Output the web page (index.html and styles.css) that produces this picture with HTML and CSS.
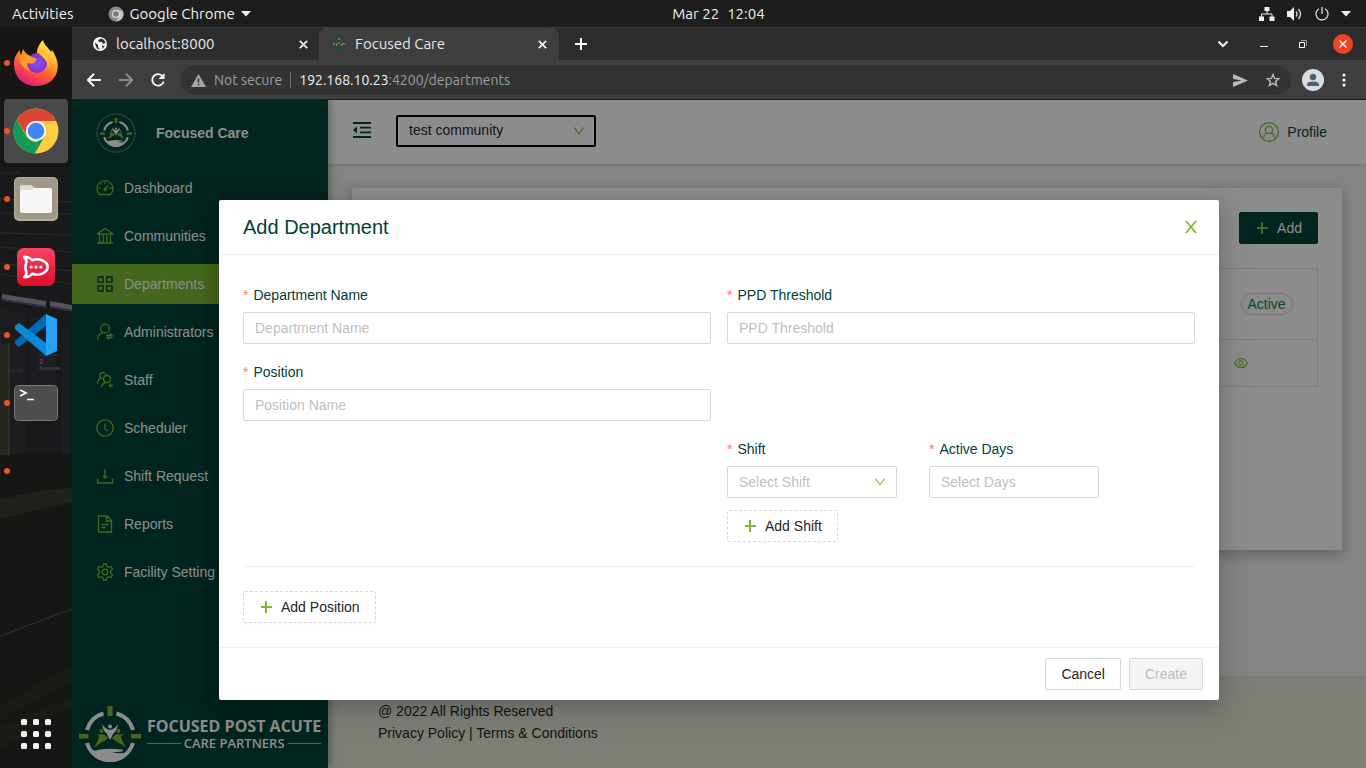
FILE: index.html
```html
<!DOCTYPE html>
<html lang="en">
<head>
<meta charset="utf-8">
<meta name="viewport" content="width=device-width, initial-scale=1">
<title>Focused Care</title>
<link rel="stylesheet" href="styles.css">
</head>
<body>
<svg class="defs" aria-hidden="true">
  <symbol id="plus" viewBox="0 0 14 14"><path d="M7 1v12M2 7h11" fill="none" stroke="currentColor" stroke-width="2"/></symbol>
  <symbol id="down" viewBox="64 64 896 896"><path fill="currentColor" d="M884 256h-75c-5.100 0-9.900 2.500-12.900 6.600L512 654.200 227.900 262.600c-3-4.100-7.800-6.600-12.900-6.600h-75c-6.500 0-10.300 7.400-6.500 12.700l352.600 486.100c12.800 17.600 39 17.600 51.700 0l352.600-486.100c3.900-5.300.1-12.700-6.400-12.700z"/></symbol>
  <symbol id="mark" viewBox="0 0 62 56">
    <g fill="none" stroke="#fff" stroke-width="4">
      <path d="M37.500 7.500A24 24 0 0 1 54 24M54 37A24 24 0 0 1 8 37M8 24A24 24 0 0 1 24.500 7.500"/>
    </g>
    <path d="M28.500 0h5v10h-5zM0 28h9.500v4.500H0zM52 28h10v4.500H52z" fill="#7cba35"/>
    <g fill="#7cba35"><circle cx="22.500" cy="25" r="2"/><circle cx="39.500" cy="25" r="2"/>
      <path d="M14.500 27q5 2.500 10 1l5 4-5 3.500-10 6q4.500-6 5.500-11.500zM47.500 27q-5 2.500-10 1l-5 4 5 3.500 10 6q-4.500-6-5.500-11.500z"/></g>
    <g fill="#fff"><circle cx="31" cy="20.500" r="2"/><path d="M23 18q3 5 8 6 5-1 8-6-1 7-5 10l-3 6-3-6q-4-3-5-10z"/>
      <path d="M10 44q7 1 11-.5 9-1.500 22 0 2 1 0 2l-10 1q14 2 18-2-6 11-20 11.500Q17 55.500 10 44z"/></g>
  </symbol>
</svg>

<header class="topbar">
  <span class="topbar-left">
    <span>Activities</span>
    <span class="app-menu">
      <svg width="16" height="16" viewBox="0 0 16 16"><circle cx="8" cy="8" r="7.500" fill="#8a8a8a"/><path d="M8 4.500h6.600A7.500 7.500 0 0 1 8.500 15.500L11 10z" fill="#c4c4c4"/><circle cx="8" cy="8" r="4" fill="#ddd"/><circle cx="8" cy="8" r="2.800" fill="#777"/></svg>
      Google Chrome
      <svg width="10" height="6" viewBox="0 0 10 6"><path d="M0 0h10L5 5.500z" fill="#f2f2f2"/></svg>
    </span>
  </span>
  <span class="clock"><span>Mar 22</span><span>12:04</span></span>
  <span class="tray">
    <svg width="16" height="14" viewBox="0 0 16 14" fill="#f2f2f2"><path d="M5.500 0h5v4h-5zM0 9.500h5V14H0zM10.500 9.500h5V14h-5z"/><path d="M8 4v3M2.500 10V7h10.500v3" fill="none" stroke="#f2f2f2"/></svg>
    <svg width="16" height="14" viewBox="0 0 16 14"><path d="M0 4h3l4-4v14l-4-4H0z" fill="#f2f2f2"/><path d="M9 4.500q2 2.500 0 5M11.500 2q4 5 0 10" fill="none" stroke="#ddd" stroke-width="1.300"/></svg>
    <svg width="14" height="14" viewBox="0 0 14 14"><path d="M7 0v7M4 1.800a6 6 0 1 0 6 0" fill="none" stroke="#ddd" stroke-width="1.300"/></svg>
    <svg width="10" height="6" viewBox="0 0 10 6"><path d="M0 0h10L5 5.500z" fill="#f2f2f2"/></svg>
  </span>
</header>

<div class="desktop">
  <nav class="dock" aria-label="Dock">
    <svg class="wallpaper" viewBox="0 0 72 741" preserveAspectRatio="none" aria-hidden="true">
      <rect width="72" height="741" fill="#161615"/>
      <rect y="140" width="72" height="287" fill="#18191a"/>
      <path d="M0 146h20M0 172l72 3M0 186l72 1M0 206l72 2M0 220l72 5M0 236l72 8M0 247l72 10" stroke="#262622" stroke-width="1.500" fill="none"/>
      <path d="M2 267l44 7v5L2 272zM50 274l22 4v5l-22-4z" fill="#56525c"/>
      <path d="M2 273l44 7M50 280l22 4" stroke="#392e4c" stroke-width="1.500"/>
      <path d="M0 280l26 7v140H9V316H0z" fill="#1b1c1e"/>
      <path d="M0 316l9 2v110H0z" fill="#26251f"/><path d="M9 316v112" stroke="#3c3a31"/>
      <path d="M30 290h26v80H30zM62 300h8v128h-8z" fill="#1b1d22"/>
      <path d="M38 328h22" stroke="#333"/>
      <text x="39" y="337" class="street">2</text><text x="39" y="343" class="avenue">Avenue</text>
      <text x="9" y="345" class="avenue faded">enue</text>
      <path d="M0 472l40-8 32-3v14L0 492z" fill="#22201b"/>
      <path d="M0 609l72-27" stroke="#32312e"/>
      <path d="M0 677l72-37v14L0 694zM0 700l72-30v10L0 722z" fill="#1a1916"/>
    </svg>
    <button class="dock-item running" aria-label="Firefox">
      <svg width="46" height="48" viewBox="0 0 46 48"><defs><linearGradient id="fx" x1=".8" y1="0" x2=".3" y2="1"><stop offset="0" stop-color="#fff44f"/><stop offset=".35" stop-color="#ffb02e"/><stop offset=".65" stop-color="#ff5a30"/><stop offset="1" stop-color="#e31587"/></linearGradient><radialGradient id="fy"><stop offset="0" stop-color="#7d54f5"/><stop offset="1" stop-color="#8a2fc2"/></radialGradient></defs>
      <path d="M30 1c1 5 5 7 8 12l1-2c5 7 7 15 5 22-3 9-11 14-21 14C10 47 1 38 1 25 1 18 4 14 7 11c0 2 0 4 1 5l2-6c1 3 4 5 7 7 3-1 5-1 7 0-1-6 2-12 6-16z" fill="url(#fx)"/><circle cx="24" cy="24" r="10" fill="url(#fy)"/><path d="M7 17q5-3 10 0l7 3-3 4q-4 1-7 0 0 5 4 8-8-2-11-9z" fill="#ff9a2c"/><path d="M25 14q12 1 11 14-2-7-11-14z" fill="#ffc13b"/></svg>
    </button>
    <button class="dock-item running focused" aria-label="Google Chrome">
      <svg width="46" height="46" viewBox="0 0 46 46"><circle cx="23" cy="23" r="22.500" fill="#ffcd42"/><path d="M3.500 12A22.500 22.500 0 0 1 42.500 12L43 13H23L15 29z" fill="#dc4437"/><path d="M3.500 11.700L14 29q4 5 10 5l-2 11.500A22.500 22.500 0 0 1 3.500 11.700z" fill="#149a58"/><path d="M24 34l-2 11.500 10-18z" fill="#149a58"/><circle cx="23" cy="23" r="10.200" fill="#f4f4f4"/><circle cx="23" cy="23" r="8.300" fill="#4285f4"/></svg>
    </button>
    <button class="dock-item running" aria-label="Files">
      <svg width="44" height="44" viewBox="0 0 44 44"><rect width="44" height="44" rx="5" fill="#b5ae9b"/><rect x="1" y="1" width="42" height="41" rx="4" fill="#9f9887"/><path d="M6 10q0-2 2-2h9l4 3h15q2 0 2 2v4H6z" fill="#e0ddd2"/><path d="M6 15q0-2 2-2h10l3-2h15q2 0 2 2v21q0 2-2 2H8q-2 0-2-2z" fill="#f8f7f5"/></svg>
    </button>
    <button class="dock-item running" aria-label="Rocket.Chat">
      <svg width="38" height="38" viewBox="0 0 39 39"><defs><linearGradient id="rc" x2="0" y2="1"><stop stop-color="#f84460"/><stop offset="1" stop-color="#dd0c2c"/></linearGradient></defs><rect width="39" height="39" rx="7" fill="url(#rc)"/><path d="M7.500 9q5 0 8 3.500 6-2 11 .5 5 2.500 5 6.500t-5 6.500q-5 2.500-11 .5-3 3.500-8 3.500 3-3 2-6-2-4 0-8.500 1-3-2-6z" fill="none" stroke="#fff" stroke-width="2.600" stroke-linejoin="round"/><g fill="#fff"><circle cx="14.500" cy="19.500" r="1.600"/><circle cx="19.500" cy="19.500" r="1.600"/><circle cx="24.500" cy="19.500" r="1.600"/></g></svg>
    </button>
    <button class="dock-item running" aria-label="Visual Studio Code">
      <svg width="42" height="42" viewBox="0 0 42 42"><path d="M31 0L0 27v3l4 3L31 12z" fill="#0069b4"/><path d="M0 12l4-3 27 20v13L0 15z" fill="#0a8ad6"/><path d="M31 0l11 5v32l-11 5z" fill="#26a3f0"/></svg>
    </button>
    <button class="dock-item running" aria-label="Terminal">
      <svg width="44" height="36" viewBox="0 0 44 36"><rect x=".5" y=".5" width="43" height="35" rx="4" fill="#4d4d4d" stroke="#777"/><path d="M6 5l6 3-6 3M13 14.500h7" fill="none" stroke="#fff" stroke-width="1.700"/></svg>
    </button>
    <button class="dock-item running" aria-label="Running application"></button>
    <button class="dock-item apps" aria-label="Show Applications">
      <svg width="30" height="30" viewBox="0 0 30 30" fill="#f2f2f2"><rect width="6" height="6" rx="1.500"/><rect x="12" width="6" height="6" rx="1.500"/><rect x="24" width="6" height="6" rx="1.500"/><rect y="12" width="6" height="6" rx="1.500"/><rect x="12" y="12" width="6" height="6" rx="1.500"/><rect x="24" y="12" width="6" height="6" rx="1.500"/><rect y="24" width="6" height="6" rx="1.500"/><rect x="12" y="24" width="6" height="6" rx="1.500"/><rect x="24" y="24" width="6" height="6" rx="1.500"/></svg>
    </button>
  </nav>

  <div class="browser">
    <div class="tabstrip">
      <div class="tab">
        <svg width="14" height="14" viewBox="0 0 14 14"><circle cx="7" cy="7" r="7" fill="#f2f2f2"/><path d="M2 5.500l3 2.500v2l2 2.500Q2.500 12 2 5.500zM6 2.500l3-1q3 1.500 3.500 4.500L10 7 9 5H6.500L5 4zM9 8.500l2.500.5L9.500 12z" fill="#2c2c2c"/></svg>
        <span class="tab-title">localhost:8000</span>
        <button class="tab-close" aria-label="Close tab"><svg width="9" height="9" viewBox="0 0 9 9"><path d="M.8.8l7.400 7.400M8.200.8L.8 8.200" stroke="#f2f2f2" stroke-width="1.700"/></svg></button>
      </div>
      <div class="tab active">
        <svg width="16" height="16" viewBox="0 0 16 16"><circle cx="8" cy="8" r="7" fill="none" stroke="#264940"/><path d="M4 13q4 2 8-1l-2-1H6z" fill="#1c4a40"/><path d="M8 2v2M2 8h4M11 8h4M5 9.500l3-2.500 3 2.500" stroke="#62a13a" stroke-width="1.500" stroke-dasharray="2 1" fill="none"/></svg>
        <span class="tab-title">Focused Care</span>
        <button class="tab-close" aria-label="Close tab"><svg width="9" height="9" viewBox="0 0 9 9"><path d="M.8.8l7.400 7.400M8.200.8L.8 8.200" stroke="#f2f2f2" stroke-width="1.700"/></svg></button>
      </div>
      <button class="new-tab" aria-label="New tab"><svg width="12" height="12" viewBox="0 0 12 12"><path d="M6 0v12M0 6h12" stroke="#fff" stroke-width="2"/></svg></button>
      <div class="window-controls">
        <button aria-label="Search tabs"><svg width="12" height="8" viewBox="0 0 12 8"><path d="M1.500 1.500L6 6l4.500-4.500" fill="none" stroke="#f2f2f2" stroke-width="2"/></svg></button>
        <button aria-label="Minimize"><svg width="8" height="9" viewBox="0 0 8 9"><path d="M0 6.500h8" stroke="#f2f2f2"/></svg></button>
        <button aria-label="Restore"><svg width="8" height="8" viewBox="0 0 8 8"><path d="M.5 2.500h5v5h-5z" fill="none" stroke="#fff"/><path d="M2 .5h5.500V6" fill="none" stroke="#999"/></svg></button>
        <button class="window-close" aria-label="Close"><svg width="8" height="8" viewBox="0 0 8 8"><path d="M.5.5l7 7M7.500.5l-7 7" stroke="#fff" stroke-width="1.300"/></svg></button>
      </div>
    </div>
    <div class="toolbar">
      <button aria-label="Back"><svg width="14" height="14" viewBox="0 0 14 14"><path d="M14 7H1.500M7 .8L1 7l6 6.200" fill="none" stroke="#f5f5f5" stroke-width="2"/></svg></button>
      <button aria-label="Forward"><svg width="14" height="14" viewBox="0 0 14 14"><path d="M0 7h12.500M7 .8L13 7l-6 6.200" fill="none" stroke="#8b8b8b" stroke-width="2"/></svg></button>
      <button aria-label="Reload"><svg width="14" height="14" viewBox="0 0 15 15"><path d="M12.500 3.500A6.200 6.200 0 1 0 13.600 9" fill="none" stroke="#f5f5f5" stroke-width="2"/><path d="M14.500 0v6.500H8z" fill="#f5f5f5"/></svg></button>
      <div class="omnibox">
        <svg width="15" height="13" viewBox="0 0 15 13"><path d="M7.500 0L15 13H0z" fill="#a3a7ab"/><path d="M7.500 4.500v4M7.500 9.800v1.500" stroke="#333" stroke-width="1.500"/></svg>
        <span class="security">Not secure</span>
        <span class="url"><b>192.168.10.23</b>:4200/departments</span>
        <button aria-label="Share"><svg width="15" height="13" viewBox="0 0 15 13"><path d="M0 0l15 6.500L0 13V8l9-1.500L0 5z" fill="#b8bbbf"/></svg></button>
        <button aria-label="Bookmark"><svg width="14" height="14" viewBox="0 0 14 14"><path d="M7 1.500l1.600 3.900 4.200.3-3.200 2.700 1 4.100L7 10.300l-3.600 2.200 1-4.100L1.200 5.700l4.200-.3z" fill="none" stroke="#b8bbbf" stroke-width="1.400"/></svg></button>
      </div>
      <button class="avatar" aria-label="Account"><svg width="22" height="22" viewBox="0 0 22 22"><circle cx="11" cy="11" r="11" fill="#dadce0"/><circle cx="11" cy="8" r="3.200" fill="#4f6072"/><path d="M5 17v-1.500q0-3 6-3t6 3V17z" fill="#4f6072"/></svg></button>
      <button aria-label="Menu"><svg width="4" height="14" viewBox="0 0 4 14" fill="#f5f5f5"><circle cx="2" cy="2" r="1.600"/><circle cx="2" cy="7" r="1.600"/><circle cx="2" cy="12" r="1.600"/></svg></button>
    </div>

    <div class="page">
      <aside class="sidebar">
        <div class="brand">
          <svg width="40" height="40" viewBox="0 0 40 40"><circle cx="20" cy="20" r="19" fill="none" stroke="#9aaea9" stroke-width="1.500" stroke-dasharray="1.500 1" opacity=".7"/><use href="#mark" x="4" y="5" width="32" height="29"/></svg>
          <span>Focused Care</span>
        </div>
        <nav class="menu">
          <a href="#"><svg width="18" height="18" viewBox="0 0 18 18"><path d="M3.500 15.500a8 8 0 1 1 11 0zM9 10.500l3-4M9 2.500v2M4.500 4.500l1 1M2.500 9h2M13.500 9h2M13.300 4.500l-.5.500"/><circle cx="9" cy="10.500" r="1"/></svg>Dashboard</a>
          <a href="#"><svg width="18" height="18" viewBox="0 0 18 18"><path d="M1.500 6.500L9 1.500l7.500 5v.5h-15zM3.500 7v8.500M7.200 7v8.500M10.800 7v8.500M14.500 7v8.500M1 16h16"/></svg>Communities</a>
          <a href="#" class="current"><svg width="18" height="18" viewBox="0 0 18 18"><path d="M2 2h5.200v5.200H2zM10.800 2H16v5.200h-5.200zM2 10.800h5.200V16H2zM10.800 10.800H16V16h-5.200z"/></svg>Departments</a>
          <a href="#"><svg width="18" height="18" viewBox="0 0 18 18"><circle cx="9" cy="5.500" r="4.300"/><path d="M1.500 16.500Q2 10.500 7.500 9.600M10 12.500h6l-2-2M16.500 14.500H11l2 2"/></svg>Administrators</a>
          <a href="#"><svg width="18" height="18" viewBox="0 0 18 18"><circle cx="11" cy="8" r="3.500"/><path d="M5.500 16.500q.5-4.500 5-5M14.500 12.500v4M12.500 14.500h4.500M6.500 7.500Q3 7 3.800 4q1-3 4-2.500 1.500.5 2.200 2M1.500 13q0-4 3.500-6"/></svg>Staff</a>
          <a href="#"><svg width="18" height="18" viewBox="0 0 18 18"><circle cx="9" cy="9" r="8.200"/><path d="M9 4.500V10l3 2"/></svg>Scheduler</a>
          <a href="#"><svg width="18" height="18" viewBox="0 0 18 18"><path d="M1.500 11.500v4.500h15v-4.500M9 2v9M7 9l2 2 2-2"/></svg>Shift Request</a>
          <a href="#"><svg width="18" height="18" viewBox="0 0 18 18"><path d="M2.500 1h8.500l4.500 4.500V17h-13zM10.500 1v5h5M5.500 9.500h7M5.500 12.500h4"/></svg>Reports</a>
          <a href="#"><svg width="18" height="18" viewBox="0 0 18 18"><circle cx="9" cy="9" r="2.800"/><path d="M7.500 1h3l.5 2.300 1.700 1 2.300-.8L16.500 6l-1.700 1.700v2.600l1.700 1.700-1.500 2.500-2.300-.8-1.700 1-.5 2.300h-3L7 14.700l-1.700-1-2.300.8L1.500 12l1.700-1.700V7.700L1.500 6 3 3.500l2.300.8 1.700-1z"/></svg>Facility Setting</a>
        </nav>
        <div class="partner">
          <svg width="62" height="56"><use href="#mark"/></svg>
          <div class="partner-text"><div class="partner-name">FOCUSED POST ACUTE</div><div class="partner-sub">CARE PARTNERS</div></div>
        </div>
      </aside>
      <div class="layout">
        <header class="app-header">
          <button class="fold" aria-label="Collapse menu"><svg width="18" height="16" viewBox="0 0 18 16"><path d="M0 1h18M7 5.700h11M7 10.300h11M0 15h18" stroke="#004237" stroke-width="1.800"/><path d="M0 8l4-3.500v7z" fill="#004237"/></svg></button>
          <div class="select-wrap community">
            <select aria-label="Community"><option>test community</option></select>
            <svg width="12" height="12"><use href="#down"/></svg>
          </div>
          <a class="profile" href="#"><svg width="20" height="20" viewBox="0 0 20 20" fill="none" stroke="#7cba35" stroke-width="1.200"><circle cx="10" cy="10" r="9.400"/><circle cx="10" cy="8" r="3.600"/><path d="M4.500 16q.5-4.500 4-5M15.500 16q-.5-4.500-4-5"/></svg>Profile</a>
        </header>
        <main class="content">
          <section class="card">
            <div class="card-bar"><button class="btn primary"><svg width="14" height="14"><use href="#plus"/></svg>Add</button></div>
            <table class="list">
              <tr class="tall"><td></td><td class="last"><span class="tag">Active</span></td></tr>
              <tr><td></td><td class="last actions"><button class="view" aria-label="View"><svg width="14" height="14" viewBox="64 64 896 896"><path fill="currentColor" d="M942.200 486.200C847.400 286.500 704.100 186 512 186c-192.200 0-335.400 100.500-430.200 300.300a60.300 60.300 0 0 0 0 51.500C176.600 737.500 319.900 838 512 838c192.200 0 335.400-100.500 430.200-300.300 7.700-16.200 7.700-35 0-51.500zM512 766c-161.300 0-279.400-81.800-362.700-254C232.600 339.800 350.700 258 512 258c161.300 0 279.400 81.800 362.700 254C791.500 684.200 673.400 766 512 766zm-4-430c-97.200 0-176 78.800-176 176s78.800 176 176 176 176-78.800 176-176-78.800-176-176-176zm0 288c-61.900 0-112-50.100-112-112s50.100-112 112-112 112 50.100 112 112-50.100 112-112 112z"/></svg></button></td></tr>
            </table>
          </section>
        </main>
        <footer class="app-footer">
          <div>@ 2022 All Rights Reserved</div>
          <div><a href="#">Privacy Policy</a> | <a href="#">Terms &amp; Conditions</a></div>
        </footer>
      </div>

      <div class="mask">
        <form class="modal" role="dialog" aria-labelledby="dialog-title">
          <div class="modal-head">
            <h2 id="dialog-title">Add Department</h2>
            <button type="button" class="modal-close" aria-label="Close"><svg width="16" height="16" viewBox="64 64 896 896"><path fill="currentColor" stroke="currentColor" stroke-width="24" d="M563.800 512l262.500-312.900c4.400-5.200.7-13.100-6.100-13.100h-79.800c-4.700 0-9.200 2.100-12.300 5.700L511.600 449.800 295.100 191.700c-3-3.600-7.500-5.700-12.300-5.700H203c-6.800 0-10.500 7.900-6.100 13.100L459.400 512 196.900 824.900A7.950 7.950 0 0 0 203 838h79.800c4.700 0 9.200-2.100 12.300-5.700l216.500-258.100 216.500 258.100c3 3.600 7.500 5.700 12.300 5.700h79.800c6.800 0 10.500-7.900 6.100-13.100L563.800 512z"/></svg></button>
          </div>
          <div class="modal-body">
            <div class="grid">
              <div class="field"><label for="name">Department Name</label><input id="name" type="text" placeholder="Department Name"></div>
              <div class="field"><label for="ppd">PPD Threshold</label><input id="ppd" type="text" placeholder="PPD Threshold"></div>
              <div class="field"><label for="position">Position</label><input id="position" type="text" placeholder="Position Name"></div>
              <div class="shifts">
                <div class="shift-row">
                  <div class="field"><label for="shift">Shift</label><div class="select-wrap"><select id="shift" class="empty"><option>Select Shift</option></select><svg width="12" height="12"><use href="#down"/></svg></div></div>
                  <div class="field"><label for="days">Active Days</label><input id="days" type="text" placeholder="Select Days"></div>
                </div>
                <button type="button" class="btn dashed"><svg width="14" height="14"><use href="#plus"/></svg>Add Shift</button>
              </div>
            </div>
            <hr>
            <button type="button" class="btn dashed"><svg width="14" height="14"><use href="#plus"/></svg>Add Position</button>
          </div>
          <div class="modal-foot">
            <button type="button" class="btn">Cancel</button>
            <button type="submit" class="btn" disabled>Create</button>
          </div>
        </form>
      </div>
    </div>
  </div>
</div>
</body>
</html>
```

FILE: styles.css
```css
:root {
  --green: #7cba35;
  --dark: #004237;
  --line: #d9d9d9;
  --system: Ubuntu, "Noto Sans", sans-serif;
}

* { box-sizing: border-box; }

body {
  margin: 0;
  height: 100vh;
  display: flex;
  flex-direction: column;
  overflow: hidden;
  font: 14px/22px "Liberation Sans", Arial, sans-serif;
  color: #262626;
}

button, input, select { font: inherit; margin: 0; }
button { border: 0; padding: 0; background: none; color: inherit; cursor: pointer; }
a { color: inherit; text-decoration: none; }
svg { display: block; flex: none; }
.defs { position: absolute; width: 0; height: 0; }

/* System bar */
.topbar {
  flex: none;
  height: 27px;
  padding: 0 15px 0 12px;
  display: grid;
  grid-template-columns: 1fr auto 1fr;
  align-items: center;
  background: #1d1d1d;
  color: #f2f2f2;
  font-family: var(--system);
  font-size: 15px;
}
.topbar-left, .app-menu, .clock, .tray { display: flex; align-items: center; }
.topbar-left { gap: 34px; }
.app-menu { gap: 6px; }
.clock { gap: 8px; padding-left: 74px; }
.tray { gap: 12px; justify-content: flex-end; }

.desktop { flex: 1; min-height: 0; display: flex; }

/* Dock */
.dock {
  position: relative;
  width: 72px;
  padding: 4px 4px 2px;
  display: flex;
  flex-direction: column;
  gap: 4px;
}
.wallpaper { position: absolute; inset: 0; width: 100%; height: 100%; }
.street { font: bold 8px "Liberation Sans", sans-serif; fill: #4c4d50; }
.avenue { font: bold 6px "Liberation Sans", sans-serif; fill: #434447; }
.faded { fill: #303134; }
.dock-item {
  position: relative;
  width: 64px;
  height: 64px;
  display: grid;
  place-items: center;
  border-radius: 4px;
}
.focused { background: #484848; }
.running::before {
  content: "";
  position: absolute;
  left: 0;
  top: 29px;
  width: 6px;
  height: 6px;
  border-radius: 50%;
  background: #e95420;
}
.apps { margin-top: auto; }

/* Browser window */
.browser { flex: 1; min-width: 0; display: flex; flex-direction: column; }
.tabstrip, .toolbar { font-family: var(--system); display: flex; align-items: center; }
.tabstrip {
  height: 34px;
  padding: 0 13px 1px 0;
  border-top: 1px solid #3b3b3b;
  background: linear-gradient(#2c2c2c 32px, #3e3e3e 32px);
  font-size: 15px;
}
.tab {
  width: 247px;
  height: 100%;
  padding: 0 11px 0 21px;
  display: flex;
  align-items: center;
  gap: 9px;
  color: #e8e8e8;
}
.tab.active {
  width: 240px;
  padding: 0 12px;
  gap: 8px;
  border-radius: 8px 8px 0 0;
  background: #3e3e3e;
}
.tab-title { flex: 1; }
.new-tab { margin-left: 16px; }
.window-controls { margin-left: auto; display: flex; align-items: center; gap: 31px; }
.window-close {
  width: 20px;
  height: 20px;
  margin-left: -5px;
  border-radius: 50%;
  display: grid;
  place-items: center;
  background: #f04323;
}
.toolbar {
  height: 39px;
  padding: 0 20px 0 15px;
  gap: 18px;
  background: #3e3e3e;
  border-bottom: 1px solid #1f1f1f;
}
.omnibox {
  flex: 1;
  height: 30px;
  margin-left: -3px;
  padding: 0 11px;
  display: flex;
  align-items: center;
  gap: 8px;
  border-radius: 15px;
  background: #333;
  color: #9a9fa3;
}
.omnibox button { margin-left: 10px; }
.security { padding-right: 8px; line-height: 16px; border-right: 1px solid #777; }
.url { flex: 1; }
.url b { font-weight: 400; color: #f5f5f5; }
.avatar { margin-left: -7px; }

/* Application */
.page { position: relative; flex: 1; min-height: 0; display: flex; overflow: hidden; }
.sidebar {
  position: relative;
  z-index: 1;
  width: 256px;
  display: flex;
  flex-direction: column;
  background: var(--dark);
  color: #fff;
  box-shadow: 2px 0 8px rgba(0, 0, 0, .3);
}
.brand {
  height: 64px;
  padding: 2px 24px 0;
  display: flex;
  align-items: center;
  gap: 20px;
  font-weight: 700;
}
.menu { display: flex; flex-direction: column; gap: 8px; padding-top: 4px; }
.menu a { height: 40px; padding: 0 24px; display: flex; align-items: center; gap: 10px; }
.menu svg { fill: none; stroke: var(--green); stroke-width: 1.3px; }
.menu .current { background: var(--green); }
.menu .current svg { stroke: var(--dark); }
.partner { margin-top: auto; padding: 0 7px 6px; display: flex; align-items: center; gap: 6px; }
.partner-text { flex: 1; font-family: "Open Sans", sans-serif; white-space: nowrap; }
.partner-name { font-size: 16px; font-weight: 700; line-height: 18px; }
.partner-sub { display: flex; align-items: center; gap: 3px; font-size: 13px; font-weight: 600; line-height: 16px; }
.partner-sub::before, .partner-sub::after { content: ""; flex: 1; height: 1px; background: #aab; }

.layout { flex: 1; min-width: 0; display: flex; flex-direction: column; background: #f0f0ed; }
.app-header {
  height: 64px;
  padding: 0 39px 0 25px;
  display: flex;
  align-items: center;
  background: #fff;
  box-shadow: 0 1px 4px rgba(0, 21, 41, .12);
}
.fold { padding-bottom: 4px; }
.select-wrap { position: relative; }
.select-wrap select { width: 100%; cursor: pointer; }
.select-wrap svg { position: absolute; right: 11px; top: 10px; color: var(--green); pointer-events: none; }
.community { width: 200px; margin: 0 auto 2px 25px; }
input, select {
  appearance: none;
  width: 100%;
  height: 32px;
  padding: 4px 11px;
  border: 1px solid var(--line);
  border-radius: 2px;
  background: #fff;
  color: #262626;
  outline: 0;
}
.community select { padding: 2px 11px 4px; border: 2px solid #000; }
.profile { display: flex; align-items: center; gap: 8px; color: var(--dark); }
.content { flex: 1; padding: 24px; }
.card { min-height: 362px; padding: 24px; background: #fff; box-shadow: 0 4px 12px rgba(0, 0, 0, .25); }
.card-bar { display: flex; justify-content: flex-end; margin-bottom: 24px; }
.list { width: 100%; border-collapse: collapse; }
.list tr { height: 47px; border: 1px solid #e4e4e4; }
.list .tall { height: 71px; }
.list td { padding: 0 16px; }
.list .last { width: 93px; }
.list .actions { padding-left: 9px; }
.tag {
  display: block;
  width: 52px;
  line-height: 20px;
  text-align: center;
  border: 1px solid var(--line);
  border-radius: 11px;
  color: #008a3c;
}
.view { display: block; color: var(--green); }
.app-footer { padding: 24px 50px; background: #e3e7d9; }

.btn {
  height: 32px;
  padding: 0 15px;
  display: inline-flex;
  align-items: center;
  justify-content: center;
  gap: 8px;
  border: 1px solid var(--line);
  border-radius: 2px;
  background: #fff;
  box-shadow: 0 2px 0 rgba(0, 0, 0, .015);
}
.btn svg { color: var(--green); }
.btn.primary { border-color: var(--dark); background: var(--dark); color: #fff; }
.btn.dashed { border-style: dashed; }
.btn:disabled { background: #f5f5f5; color: #bfbfbf; cursor: default; }

/* Dialog */
.mask {
  position: absolute;
  inset: 0;
  z-index: 2;
  display: flex;
  justify-content: center;
  align-items: flex-start;
  padding-top: 100px;
  background: rgba(0, 0, 0, .45);
}
.modal {
  width: 100%;
  max-width: 1000px;
  background: #fff;
  border-radius: 2px;
  box-shadow: 0 6px 16px rgba(0, 0, 0, .12), 0 9px 28px 8px rgba(0, 0, 0, .1);
}
.modal-head {
  height: 55px;
  padding: 0 20px 0 24px;
  display: flex;
  align-items: center;
  justify-content: space-between;
  border-bottom: 1px solid #f0f0f0;
}
.modal-head h2 { margin: 0; font-size: 20px; font-weight: 400; color: var(--dark); }
.modal-close { color: var(--green); }
.modal-body { padding: 29px 24px 24px; }
.grid { display: grid; grid-template-columns: 1fr 1fr; gap: 17px 16px; }
.field { display: flex; flex-direction: column; gap: 6px; }
label { color: var(--dark); }
label::before { content: "*"; margin-right: 5px; color: #ff7875; }
::placeholder, select.empty { color: #bfbfbf; opacity: 1; }
.shifts { grid-column: 2; grid-row: 3; }
.shift-row { display: grid; grid-template-columns: 170px 170px; gap: 32px; margin-bottom: 12px; }
hr { height: 1px; margin: 24px 0; border: 0; background: #f0f0f0; }
.modal-foot {
  padding: 10px 16px;
  display: flex;
  justify-content: flex-end;
  gap: 8px;
  border-top: 1px solid #f0f0f0;
}
```
